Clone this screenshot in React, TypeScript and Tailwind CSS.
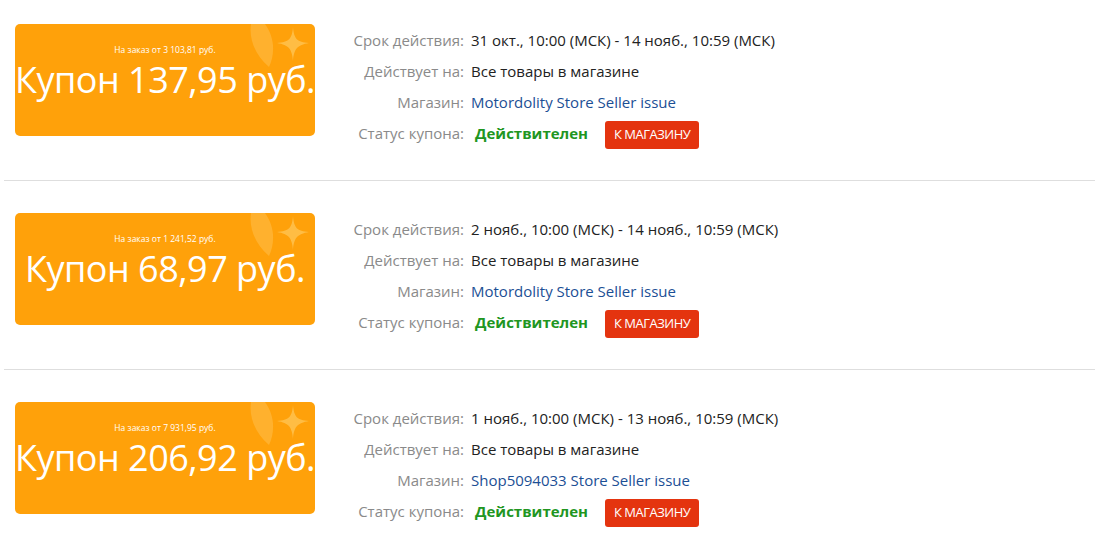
import React from 'react';

type Coupon = {
  min: string;
  amount: string;
  period: string;
  store: string;
};

const COUPONS: Coupon[] = [
  {
    min: 'На заказ от 3 103,81 руб.',
    amount: 'Купон 137,95 руб.',
    period: '31 окт., 10:00 (МСК) - 14 нояб., 10:59 (МСК)',
    store: 'Motordolity Store Seller issue',
  },
  {
    min: 'На заказ от 1 241,52 руб.',
    amount: 'Купон 68,97 руб.',
    period: '2 нояб., 10:00 (МСК) - 14 нояб., 10:59 (МСК)',
    store: 'Motordolity Store Seller issue',
  },
  {
    min: 'На заказ от 7 931,95 руб.',
    amount: 'Купон 206,92 руб.',
    period: '1 нояб., 10:00 (МСК) - 13 нояб., 10:59 (МСК)',
    store: 'Shop5094033 Store Seller issue',
  },
];

// leaf + sparkle in the card corner
const Decor = () => (
  <svg className="absolute top-0 right-[4px]" width="64" height="46" viewBox="0 0 64 46">
    <path d="M4 0 C2 14 7 30 22 43 C28 30 28 14 18 0 Z" fill="#ffc04d" opacity="0.55" />
    <path d="M46 3 C47 15 50 18 62 19 C50 21 47 25 46 37 C45 25 42 21 30 19 C42 18 45 15 46 3 Z" fill="#ffc04a" opacity="0.9" />
  </svg>
);

const CouponCard = ({ c }: { c: Coupon }) => (
  <div className="relative w-[300px] h-[112px] shrink-0 rounded-[5px] bg-[#ffa10a] overflow-hidden flex flex-col items-center text-white">
    <Decor />
    <div className="relative mt-[21px] text-[8.5px] leading-[10px] whitespace-nowrap">{c.min}</div>
    <div className="relative mt-[4px] text-[36px] leading-[42px] whitespace-nowrap tracking-[-0.5px]">{c.amount}</div>
  </div>
);

const Row = ({ label, children }: { label: string; children: React.ReactNode }) => (
  <>
    <div className="text-right text-[#8a8a8a] h-[31px] flex items-center justify-end">{label}</div>
    <div className="h-[31px] flex items-center">{children}</div>
  </>
);

export default function App() {
  return (
    <div className="bg-white w-[1095px] h-[540px] overflow-hidden pl-[4px]" style={{ fontFamily: '"Open Sans", "Liberation Sans", sans-serif' }}>
      {COUPONS.map((c, i) => (
        <div
          key={i}
          className={`flex items-start pl-[11px] ${i === 0 ? 'pt-[24px]' : 'pt-[32px]'} ${i < COUPONS.length - 1 ? 'pb-[31px] border-b border-[#dedede]' : ''}`}
        >
          <CouponCard c={c} />
          <div className="ml-[35px] mt-[1px] grid grid-cols-[114px_auto] gap-x-[7px] text-[15px]">
            <Row label="Срок действия:">
              <span className="text-[#222]">{c.period}</span>
            </Row>
            <Row label="Действует на:">
              <span className="text-[#222]">Все товары в магазине</span>
            </Row>
            <Row label="Магазин:">
              <span className="text-[#1c4f95]">{c.store}</span>
            </Row>
            <Row label="Статус купона:">
              <span className="font-bold text-[#21961f] ml-[4px]">Действителен</span>
              <span className="ml-[17px] mt-[3px] h-[28px] px-[9px] flex items-center rounded-[3px] bg-[#e4340f] text-white text-[13px] tracking-[-0.5px]">
                К МАГАЗИНУ
              </span>
            </Row>
          </div>
        </div>
      ))}
    </div>
  );
}
